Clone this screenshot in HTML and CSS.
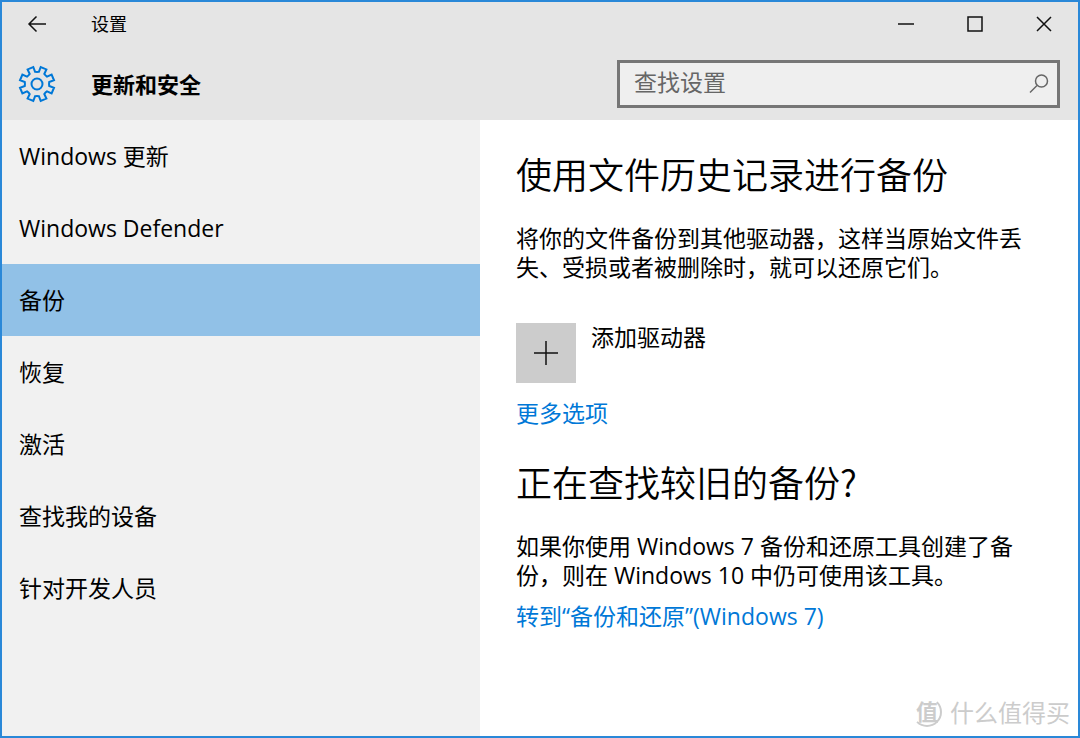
FILE: index.html
```html
<!DOCTYPE html>
<html lang="zh-CN">
<head>
    <meta charset="UTF-8">
    <meta name="viewport" content="width=device-width, initial-scale=1.0">
    <title>设置</title>
    <link rel="stylesheet" href="styles.css">
</head>
<body>

<div class="window">
    <header class="header">
        <div class="titlebar">
            <button class="icon-button back" type="button" aria-label="返回">
                <svg width="20" height="18" viewBox="0 0 20 18"><path d="M19 9H2M9.500 1.500L2 9l7.500 7.500"/></svg>
            </button>
            <span class="title">设置</span>
            <div class="window-controls">
                <button class="icon-button" type="button" aria-label="最小化">
                    <svg width="16" height="16" viewBox="0 0 16 16"><path d="M0 8h16"/></svg>
                </button>
                <button class="icon-button" type="button" aria-label="最大化">
                    <svg width="16" height="16" viewBox="0 0 16 16"><path d="M1 1h14v14H1z"/></svg>
                </button>
                <button class="icon-button" type="button" aria-label="关闭">
                    <svg width="16" height="16" viewBox="0 0 16 16"><path d="M1 1l14 14M15 1L1 15"/></svg>
                </button>
            </div>
        </div>
        <div class="page-bar">
            <svg class="gear" width="38" height="38" viewBox="-19 -19 38 38">
                <path d="M-1.900 -12.200L-3.700 -17L-9.400 -14.600L-7.300 -10A12 12 0 0 1 -10 -7.300L-14.600 -9.400L-17 -3.700L-12.200 -1.900A12 12 0 0 1 -12.200 1.900L-17 3.700L-14.600 9.400L-10 7.300A12 12 0 0 1 -7.300 10L-9.400 14.600L-3.700 17L-1.900 12.200A12 12 0 0 1 1.900 12.200L3.700 17L9.400 14.600L7.300 10A12 12 0 0 1 10 7.300L14.600 9.400L17 3.700L12.200 1.900A12 12 0 0 1 12.200 -1.900L17 -3.700L14.600 -9.400L10 -7.300A12 12 0 0 1 7.300 -10L9.400 -14.600L3.700 -17L1.900 -12.200A12 12 0 0 1 -1.900 -12.200z"/>
                <circle r="5.500"/>
            </svg>
            <h1 class="page-title">更新和安全</h1>
            <form class="search">
                <input class="search-input" type="search" placeholder="查找设置" aria-label="查找设置">
                <button class="icon-button search-button" type="submit" aria-label="搜索">
                    <svg width="20" height="20" viewBox="0 0 20 20"><circle cx="12.500" cy="7" r="6"/><path d="M8 11.500L1 18.500"/></svg>
                </button>
            </form>
        </div>
    </header>

    <div class="body">
        <nav class="sidebar">
            <a class="nav-item" href="#">Windows 更新</a>
            <a class="nav-item" href="#">Windows Defender</a>
            <a class="nav-item active" href="#">备份</a>
            <a class="nav-item" href="#">恢复</a>
            <a class="nav-item" href="#">激活</a>
            <a class="nav-item" href="#">查找我的设备</a>
            <a class="nav-item" href="#">针对开发人员</a>
        </nav>

        <main class="content">
            <section class="section">
                <h2>使用文件历史记录进行备份</h2>
                <p>将你的文件备份到其他驱动器，这样当原始文件丢<br>失、受损或者被删除时，就可以还原它们。</p>
                <div class="add-drive">
                    <button class="add-button" type="button" id="add-drive" aria-labelledby="add-label">
                        <svg width="24" height="24" viewBox="0 0 24 24"><path d="M12 0v24M0 12h24"/></svg>
                    </button>
                    <label id="add-label" for="add-drive">添加驱动器</label>
                </div>
                <a class="link" href="#">更多选项</a>
            </section>
            <section class="section">
                <h2>正在查找较旧的备份?</h2>
                <p>如果你使用 Windows 7 备份和还原工具创建了备<br>份，则在 Windows 10 中仍可使用该工具。</p>
                <a class="link" href="#">转到“备份和还原”(Windows 7)</a>
            </section>
        </main>
    </div>

    <div class="watermark">
        <span class="watermark-badge">值</span>
        <span>什么值得买</span>
    </div>
</div>

</body>
</html>
```

FILE: styles.css
```css
* {
    box-sizing: border-box;
}

body {
    margin: 0;
    font-family: "Open Sans", "Noto Sans CJK SC", sans-serif;
    font-size: 23px;
    line-height: 29px;
    color: #000;
}

.window {
    position: relative;
    display: flex;
    flex-direction: column;
    min-height: 100vh;
    border: 2px solid #2a88d8;
    background-color: #fff;
}

.header {
    background-color: #e5e5e5;
}

.titlebar {
    display: flex;
    align-items: center;
    height: 44px;
}

.icon-button {
    display: flex;
    align-items: center;
    justify-content: center;
    width: 69px;
    height: 44px;
    padding: 0;
    border: 0;
    background: none;
}

svg {
    fill: none;
    stroke: #111;
    stroke-width: 1.5;
}

.title {
    margin-left: 20px;
    font-size: 18px;
}

.window-controls {
    display: flex;
    margin-left: auto;
}

.page-bar {
    display: flex;
    align-items: center;
    height: 74px;
    padding: 2px 18px 0 16px;
}

.gear {
    flex: none;
    stroke: #0078d7;
    stroke-width: 2;
}

.page-title {
    margin: 0 0 0 35px;
    font-size: 22px;
    font-weight: bold;
}

.search {
    display: flex;
    width: 443px;
    height: 48px;
    margin-left: auto;
    border: 3px solid #767676;
    background-color: #efefef;
}

.search-input {
    flex: 1;
    min-width: 0;
    padding: 0 14px 4px;
    border: 0;
    outline: 0;
    background: none;
    font: inherit;
}

.search-input::placeholder {
    color: #666;
}

.search-button {
    width: 36px;
    height: 42px;
}

.search-button svg {
    stroke: #666;
}

.body {
    display: flex;
    flex: 1;
}

.sidebar {
    width: 478px;
    background-color: #f1f1f1;
}

.nav-item {
    display: flex;
    align-items: center;
    height: 72px;
    padding: 0 17px;
    color: #000;
    text-decoration: none;
}

.nav-item.active {
    background-color: #91c1e7;
}

.content {
    flex: 1;
    padding: 28px 36px;
}

.section {
    margin-bottom: 28px;
}

h2 {
    margin: 0 0 26px;
    font-family: "Noto Sans CJK SC", sans-serif;
    font-size: 36px;
    font-weight: 350;
    line-height: 50px;
}

p {
    margin: 0;
}

.add-drive {
    display: flex;
    gap: 15px;
    margin: 41px 0 16px;
}

.add-button {
    display: flex;
    align-items: center;
    justify-content: center;
    width: 60px;
    height: 60px;
    padding: 0;
    border: 0;
    background-color: #ccc;
}

.link {
    display: block;
    color: #0078d7;
    text-decoration: none;
}

p + .link {
    margin-top: 12px;
}

.watermark {
    position: absolute;
    right: 8px;
    bottom: 9px;
    display: flex;
    align-items: center;
    gap: 8px;
    font-size: 24px;
    color: #ccc;
}

.watermark-badge {
    width: 30px;
    height: 30px;
    border: 2px solid #ccc;
    border-top-color: transparent;
    border-left-color: transparent;
    border-radius: 50%;
    font-size: 22px;
    font-weight: bold;
    line-height: 24px;
    text-align: center;
}
```
